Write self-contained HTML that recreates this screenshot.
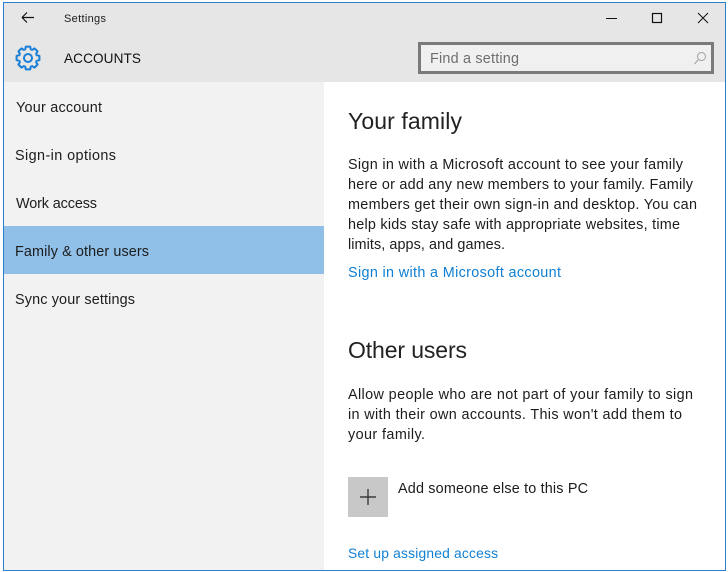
<!DOCTYPE html>
<html lang="en"><head><meta charset="utf-8"><title>Settings</title>
<style>
html,body{margin:0;padding:0;background:#fff;width:728px;height:572px;overflow:hidden}
svg{display:block}
text{font-family:"Liberation Sans",sans-serif;font-size:14.4px;fill:#1c1c1c}
.l{fill:#0f7fd2}
</style></head><body>
<svg width="728" height="572" viewBox="0 0 728 572" xmlns="http://www.w3.org/2000/svg">
<rect x="0" y="0" width="728" height="572" fill="#fff"/>
<rect x="3.5" y="2.5" width="722" height="568" fill="#fff" stroke="#2a80cf"/>
<rect x="4" y="3" width="721" height="79" fill="#e6e6e6"/>
<rect x="4" y="82" width="320" height="488" fill="#f2f2f2"/>
<rect x="4" y="226" width="320" height="48" fill="#90bfe8"/>

<path d="M22 17.5H34M22 17.5l5-5M22 17.5l5 5" fill="none" stroke="#111" stroke-width="1.2"/>
<text x="64" y="22" style="font-size:11px" textLength="42" lengthAdjust="spacing">Settings</text>

<g transform="translate(28 58)" fill="none" stroke="#1a7fd6" stroke-width="2" stroke-linejoin="round">
<circle r="4"/>
<path d="M-3.44-8.31L-2.8-8.6L-2.2-11.4L2.2-11.4L2.8-8.6L3.44-8.31"/>
<path transform="rotate(45)" d="M-3.44-8.31L-2.8-8.6L-2.2-11.4L2.2-11.4L2.8-8.6L3.44-8.31"/>
<path transform="rotate(90)" d="M-3.44-8.31L-2.8-8.6L-2.2-11.4L2.2-11.4L2.8-8.6L3.44-8.31"/>
<path transform="rotate(135)" d="M-3.44-8.31L-2.8-8.6L-2.2-11.4L2.2-11.4L2.8-8.6L3.44-8.31"/>
<path transform="rotate(180)" d="M-3.44-8.31L-2.8-8.6L-2.2-11.4L2.2-11.4L2.8-8.6L3.44-8.31"/>
<path transform="rotate(225)" d="M-3.44-8.31L-2.8-8.6L-2.2-11.4L2.2-11.4L2.8-8.6L3.44-8.31"/>
<path transform="rotate(270)" d="M-3.44-8.31L-2.8-8.6L-2.2-11.4L2.2-11.4L2.8-8.6L3.44-8.31"/>
<path transform="rotate(315)" d="M-3.44-8.31L-2.8-8.6L-2.2-11.4L2.2-11.4L2.8-8.6L3.44-8.31"/>
</g>
<text x="64" y="63" style="font-size:13.6px;fill:#111" textLength="77" lengthAdjust="spacing">ACCOUNTS</text>

<path d="M606 18.5H617" stroke="#111" stroke-width="1"/>
<rect x="652.5" y="13.5" width="9" height="9" fill="none" stroke="#111" stroke-width="1.2"/>
<path d="M698 13l10 10M708 13l-10 10" stroke="#111" stroke-width="1"/>

<rect x="419.5" y="43.5" width="293" height="29" fill="#f0f0f0" stroke="#7a7a7a" stroke-width="3"/>
<text x="430" y="63" style="font-size:14.4px;fill:#6e6e6e" textLength="89" lengthAdjust="spacing">Find a setting</text>
<circle cx="701.5" cy="56.5" r="4" fill="none" stroke="#a0a0a0" stroke-width="1"/>
<path d="M698.5 59.5L694.5 64" stroke="#a0a0a0" stroke-width="1"/>

<text x="16" y="112" textLength="86" lengthAdjust="spacing">Your account</text>
<text x="15" y="160" textLength="101" lengthAdjust="spacing">Sign-in options</text>
<text x="16" y="208" textLength="81" lengthAdjust="spacing">Work access</text>
<text x="15" y="256" textLength="134" lengthAdjust="spacing">Family &amp; other users</text>
<text x="15" y="304" textLength="120" lengthAdjust="spacing">Sync your settings</text>

<text x="348" y="129" style="font-size:23px;fill:#222" textLength="114" lengthAdjust="spacing">Your family</text>
<text x="348" y="169" textLength="335" lengthAdjust="spacing">Sign in with a Microsoft account to see your family</text>
<text x="348" y="189" textLength="345" lengthAdjust="spacing">here or add any new members to your family. Family</text>
<text x="348" y="209" textLength="349" lengthAdjust="spacing">members get their own sign-in and desktop. You can</text>
<text x="348" y="229" textLength="332" lengthAdjust="spacing">help kids stay safe with appropriate websites, time</text>
<text x="348" y="249" textLength="157" lengthAdjust="spacing">limits, apps, and games.</text>
<text class="l" x="348" y="277" textLength="213" lengthAdjust="spacing">Sign in with a Microsoft account</text>

<text x="348" y="358" style="font-size:23px;fill:#222" textLength="119" lengthAdjust="spacing">Other users</text>
<text x="348" y="399" textLength="345" lengthAdjust="spacing">Allow people who are not part of your family to sign</text>
<text x="348" y="419" textLength="334" lengthAdjust="spacing">in with their own accounts. This won't add them to</text>
<text x="348" y="439" textLength="77" lengthAdjust="spacing">your family.</text>

<rect x="348" y="477" width="40" height="40" fill="#c8c8c8"/>
<path d="M368 489V505M360 497H376" stroke="#3a3a3a" stroke-width="1.4"/>
<text x="398" y="493" textLength="190" lengthAdjust="spacing">Add someone else to this PC</text>
<text class="l" x="348" y="558" style="font-size:13.8px" textLength="150" lengthAdjust="spacing">Set up assigned access</text>
</svg>
</body></html>
